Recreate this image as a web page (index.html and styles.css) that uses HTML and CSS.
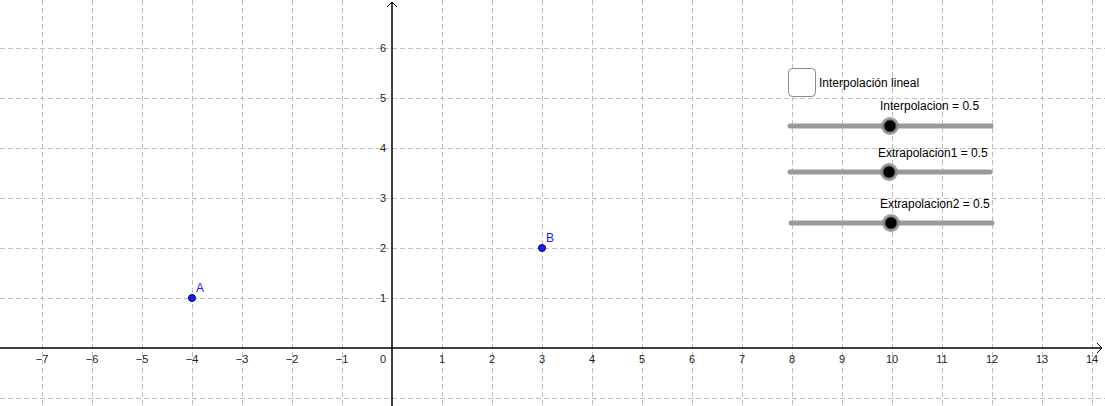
FILE: index.html
```html
<!DOCTYPE html>
<html lang="es">
<head>
  <meta charset="UTF-8">
  <meta name="viewport" content="width=device-width, initial-scale=1.0">
  <title>Interpolación lineal</title>
  <link rel="stylesheet" href="styles.css">
</head>
<body>
  <div class="view">
    <svg class="graphics" width="1105" height="406" viewBox="0 0 1105 406">
      <!-- cuadrícula, una línea por unidad (50px) -->
      <path class="grid" d="M42 0V406 M92 0V406 M142 0V406 M192 0V406 M242 0V406 M292 0V406 M342 0V406
        M442 0V406 M492 0V406 M542 0V406 M592 0V406 M642 0V406 M692 0V406 M742 0V406 M792 0V406
        M842 0V406 M892 0V406 M942 0V406 M992 0V406 M1042 0V406 M1092 0V406
        M0 48H1105 M0 98H1105 M0 148H1105 M0 198H1105 M0 248H1105 M0 298H1105 M0 398H1105"/>

      <!-- ejes -->
      <path class="axis" d="M0 348H1102 M392 2V406"/>
      <path class="arrow" d="M1097 343L1102 348L1097 353 M387 7L392 2L397 7"/>

      <g class="ticks-x">
        <text x="42" y="363">−7</text>
        <text x="92" y="363">−6</text>
        <text x="142" y="363">−5</text>
        <text x="192" y="363">−4</text>
        <text x="242" y="363">−3</text>
        <text x="292" y="363">−2</text>
        <text x="342" y="363">−1</text>
        <text x="442" y="363">1</text>
        <text x="492" y="363">2</text>
        <text x="542" y="363">3</text>
        <text x="592" y="363">4</text>
        <text x="642" y="363">5</text>
        <text x="692" y="363">6</text>
        <text x="742" y="363">7</text>
        <text x="792" y="363">8</text>
        <text x="842" y="363">9</text>
        <text x="892" y="363">10</text>
        <text x="942" y="363">11</text>
        <text x="992" y="363">12</text>
        <text x="1042" y="363">13</text>
        <text x="1092" y="363">14</text>
      </g>
      <g class="ticks-y">
        <text x="386" y="363">0</text>
        <text x="386" y="302">1</text>
        <text x="386" y="252">2</text>
        <text x="386" y="202">3</text>
        <text x="386" y="152">4</text>
        <text x="386" y="102">5</text>
        <text x="386" y="52">6</text>
      </g>

      <!-- puntos A y B -->
      <circle class="point" cx="192" cy="298" r="3.5"/>
      <text class="point-label" x="196" y="292">A</text>
      <circle class="point" cx="542" cy="248" r="3.5"/>
      <text class="point-label" x="546" y="242">B</text>

      <!-- casilla -->
      <rect class="checkbox" x="788.5" y="68.5" width="27" height="28" rx="4"/>
      <text class="caption" x="819" y="87">Interpolación lineal</text>

      <!-- deslizadores -->
      <text class="caption" x="880" y="110">Interpolacion = 0.5</text>
      <line class="track" x1="790" y1="126" x2="991" y2="126"/>
      <circle class="knob-ring" cx="890" cy="126" r="9"/>
      <circle class="knob" cx="890" cy="126" r="6"/>

      <text class="caption" x="878" y="157">Extrapolacion1 = 0.5</text>
      <line class="track" x1="790" y1="172" x2="990" y2="172"/>
      <circle class="knob-ring" cx="889" cy="172" r="9"/>
      <circle class="knob" cx="889" cy="172" r="6"/>

      <text class="caption" x="880" y="208">Extrapolacion2 = 0.5</text>
      <line class="track" x1="791" y1="223" x2="992" y2="223"/>
      <circle class="knob-ring" cx="891" cy="223" r="9"/>
      <circle class="knob" cx="891" cy="223" r="6"/>
    </svg>
  </div>
</body>
</html>
```

FILE: styles.css
```css
* {
  margin: 0;
  padding: 0;
}
body {
  background-color: #fff;
  font-family: "Liberation Sans", Arial, sans-serif;
}
.view {
  width: 1105px;
  height: 406px;
  overflow: hidden;
}
.graphics {
  display: block;
}
.grid {
  fill: none;
  stroke: #c0c0c0;
  stroke-width: 1;
  stroke-dasharray: 5 3;
  shape-rendering: crispEdges;
}
.axis {
  fill: none;
  stroke: #000;
  stroke-width: 1.5;
}
.arrow {
  fill: none;
  stroke: #000;
  stroke-width: 1;
}
.ticks-x text {
  font-size: 11px;
  fill: #222;
  text-anchor: middle;
}
.ticks-y text {
  font-size: 11px;
  fill: #222;
  text-anchor: end;
}
.point {
  fill: #1a1aff;
  stroke: #00006b;
  stroke-width: 1;
}
.point-label {
  font-size: 12px;
  fill: #1a1aff;
}
.checkbox {
  fill: #fff;
  stroke: #8a8a8a;
  stroke-width: 1;
}
.caption {
  font-size: 12px;
  fill: #000;
}
.track {
  stroke: #9a9a9a;
  stroke-width: 5;
  stroke-linecap: round;
}
.knob-ring {
  fill: #8c8c8c;
  opacity: 0.85;
}
.knob {
  fill: #000;
  stroke: #555;
  stroke-width: 1;
}
```
